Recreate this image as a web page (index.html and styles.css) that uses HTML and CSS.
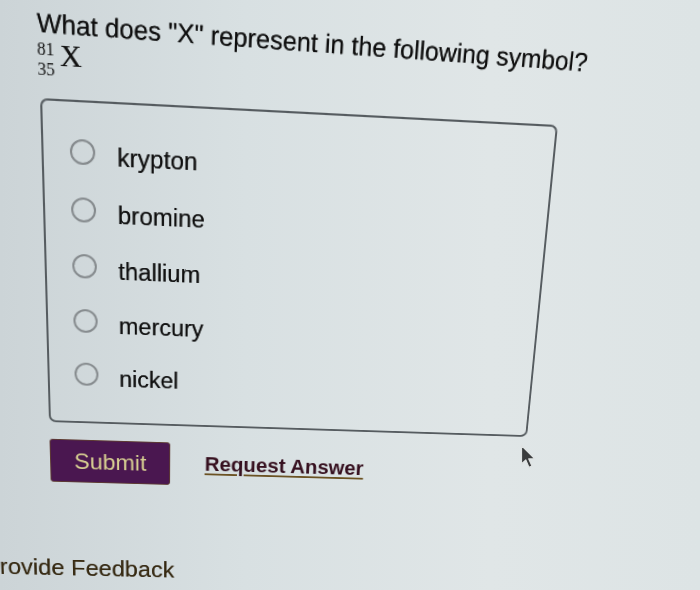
FILE: index.html
```html
<!DOCTYPE html>
<html lang="en">
<head>
<meta charset="utf-8">
<title>Question</title>
<link rel="stylesheet" href="styles.css">
</head>
<body>
<div class="page">
  <h1 class="question">What does "X" represent in the following symbol?</h1>
  <div class="symbol">
    <div class="nuclide"><span>81</span><span>35</span></div>
    <span class="element">X</span>
  </div>
  <div class="choices">
    <div class="choice"><span class="radio"></span><span class="label">krypton</span></div>
    <div class="choice"><span class="radio"></span><span class="label">bromine</span></div>
    <div class="choice"><span class="radio"></span><span class="label">thallium</span></div>
    <div class="choice"><span class="radio"></span><span class="label">mercury</span></div>
    <div class="choice"><span class="radio"></span><span class="label">nickel</span></div>
  </div>
  <div class="actions">
    <button class="submit">Submit</button>
    <a class="request">Request Answer</a>
  </div>
  <div class="feedback">Provide Feedback</div>
</div>
<svg class="cursor" width="17" height="26" viewBox="0 0 17 26">
  <path d="M1.5 1.5 L1.5 20 L5.8 16 L9 23.4 L12 22.1 L8.8 14.9 L14.8 14.7 Z" fill="#3a3c3d" stroke="#dfe3e3" stroke-width="1.2" stroke-linejoin="round"/>
</svg>
</body>
</html>
```
FILE: styles.css
```css
html, body {
  margin: 0;
  padding: 0;
  width: 700px;
  height: 590px;
  overflow: hidden;
}

html {
  background: linear-gradient(90deg, #ccd4d7 0%, #d8e0e2 35%, #e0e6e7 70%, #dde4e5 100%);
}

body {
  position: relative;
  font-family: "Liberation Sans", Arial, sans-serif;
}

.page {
  width: 700px;
  box-sizing: border-box;
  padding: 17px 0 0 40px;
  transform-origin: 0 0;
  transform: matrix3d(1.106464, 0.064456, 0, 0.000070717, 0.042515, 1.159484, 0, 0.0002765, 0, 0, 1, 0, -7.22803, -15.27484, 0, 1);
}

.question {
  margin: 0 0 0 -1.5px;
  font-weight: normal;
  font-size: 24px;
  line-height: 28px;
  color: #0d0d0d;
  white-space: nowrap;
  text-shadow: 0 0 0.5px rgba(0, 0, 0, 0.7);
  transform: rotate(0.85deg);
  transform-origin: 0 50%;
}

.symbol {
  display: flex;
  align-items: flex-start;
  height: 36px;
  margin-left: -1.5px;
  color: #111;
}

.nuclide {
  display: flex;
  flex-direction: column;
  font-family: "Liberation Serif", "Times New Roman", serif;
  font-size: 16px;
  line-height: 18px;
}

.element {
  margin-left: 5px;
  font-family: "Liberation Serif", "Times New Roman", serif;
  font-size: 28px;
  line-height: 28px;
  text-shadow: 0 0 0.5px rgba(0, 0, 0, 0.7);
}

.choices {
  width: 500px;
  height: 320px;
  box-sizing: border-box;
  margin-top: 17px;
  padding: 18px 0 0 24.5px;
  border: 2px solid #565c60;
  border-radius: 7px;
}

.choice {
  display: flex;
  align-items: center;
  height: 55px;
}

.radio {
  flex: none;
  width: 24px;
  height: 24px;
  box-sizing: border-box;
  border: 2px solid #868b8e;
  border-radius: 50%;
}

.label {
  margin-left: 21.5px;
  padding-top: 9px;
  font-size: 23.5px;
  line-height: 28px;
  color: #0f0f0f;
  text-shadow: 0 0 0.5px rgba(0, 0, 0, 0.7);
}

.actions {
  display: flex;
  align-items: center;
  margin-top: 18px;
}

.submit {
  display: flex;
  align-items: center;
  justify-content: center;
  width: 124px;
  height: 47px;
  padding: 0;
  background: #4a1750;
  color: #d8d092;
  border: 1px solid #5e3b33;
  border-radius: 3px;
  font-family: "Liberation Sans", Arial, sans-serif;
  font-size: 24px;
}

.request {
  margin-left: 36px;
  font-weight: bold;
  font-size: 21.5px;
  color: #36101f;
  text-decoration: underline;
  text-decoration-color: #6b5223;
  text-underline-offset: 3px;
}

.feedback {
  margin-top: 82.7px;
  margin-left: -72.6px;
  padding-bottom: 2px;
  font-size: 25px;
  line-height: 29px;
  color: #36280f;
  white-space: nowrap;
  text-shadow: 0 0 0.5px rgba(0, 0, 0, 0.6);
}

.cursor {
  position: absolute;
  left: 520px;
  top: 444px;
}
```
